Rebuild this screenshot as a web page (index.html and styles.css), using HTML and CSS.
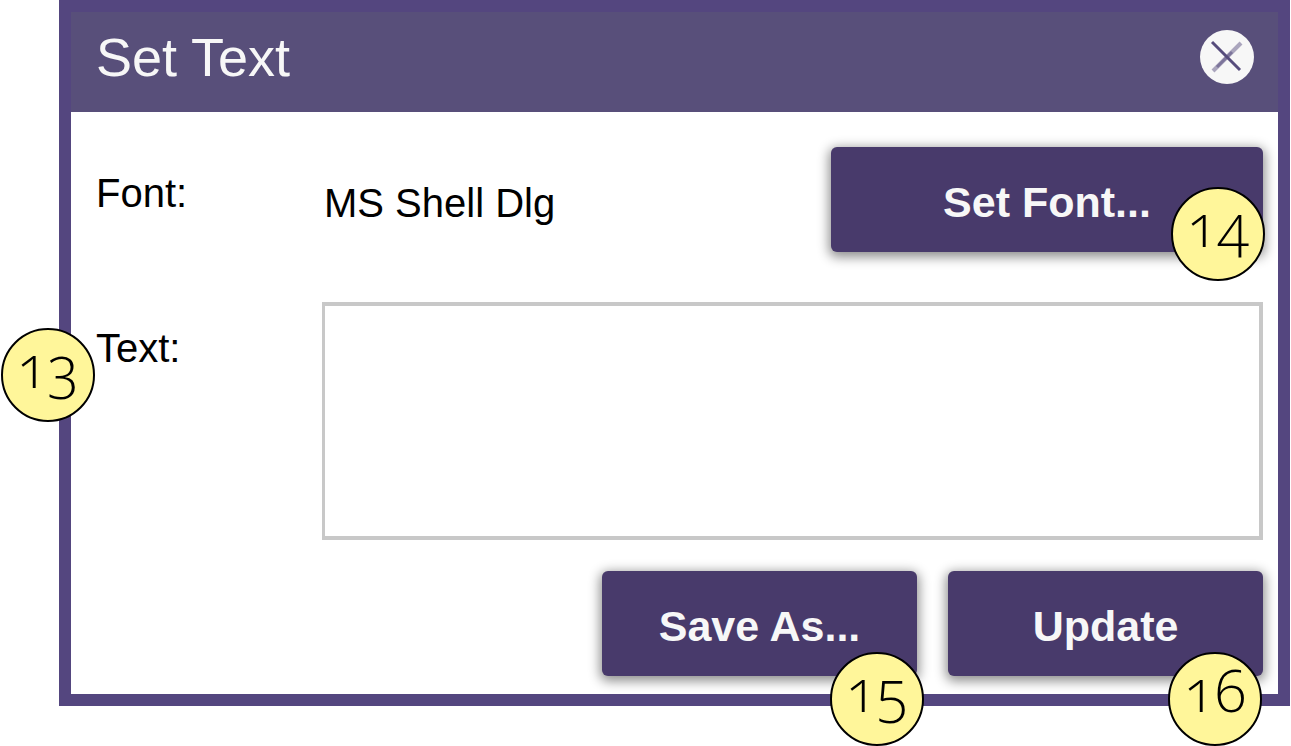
FILE: index.html
```html
<!DOCTYPE html>
<html lang="en">
<head>
    <meta charset="UTF-8">
    <meta name="viewport" content="width=device-width, initial-scale=1.0">
    <title>Set Text</title>
    <link rel="stylesheet" href="styles.css">
</head>
<body>

<form class="dialog">
    <header class="dialog-header">
        <h1>Set Text</h1>
        <button type="button" class="close" aria-label="Close">
            <svg viewBox="0 0 56 56" width="56" height="56">
                <circle cx="28" cy="28" r="27" fill="#f7f7f7"/>
                <path d="M42 14L14 42" stroke="#aaa5bd" stroke-width="4"/>
                <path d="M33 23L18 38" stroke="#7d759b" stroke-width="3"/>
                <path d="M13 13L41 41" stroke="#564c7c" stroke-width="3"/>
            </svg>
        </button>
    </header>

    <div class="dialog-body">
        <div class="row">
            <span class="label">Font:</span>
            <span class="value">MS Shell Dlg</span>
            <div class="action wide">
                <button type="button" class="btn">Set Font...</button>
                <span class="badge badge-font">14</span>
            </div>
        </div>

        <div class="row">
            <label class="label" for="text">Text:</label>
            <textarea id="text" class="text-box"></textarea>
            <span class="badge badge-text">13</span>
        </div>

        <div class="buttons">
            <div class="action">
                <button type="button" class="btn">Save As...</button>
                <span class="badge badge-save">15</span>
            </div>
            <div class="action">
                <button type="submit" class="btn">Update</button>
                <span class="badge badge-update">16</span>
            </div>
        </div>
    </div>
</form>

</body>
</html>
```
FILE: styles.css
```css
* {
    box-sizing: border-box;
}

body {
    margin: 0;
    background: #fff;
    color: #000;
    font-family: "Liberation Sans", Arial, sans-serif;
    font-size: 40px;
    line-height: 48px;
}

.dialog {
    margin: 0 1px 40px 59px;
    border: 12px solid #54467f;
    background: #fff;
}

.dialog-header {
    display: flex;
    justify-content: space-between;
    align-items: center;
    padding: 16px 23px 26px 25px;
    background: #584f7a;
}

.dialog-header h1 {
    margin: 0;
    color: #f7f7f7;
    font-size: 54px;
    font-weight: normal;
    line-height: 58px;
}

.close {
    display: flex;
    padding: 0;
    border: none;
    background: none;
    cursor: pointer;
}

.dialog-body {
    display: flex;
    flex-direction: column;
    padding: 35px 15px 18px 25px;
}

.row {
    position: relative;
    display: flex;
    margin-bottom: 50px;
}

.label {
    width: 226px;
    padding-top: 22px;
}

.value {
    flex: 1;
    padding: 32px 0 0 2px;
}

.text-box {
    flex: 1;
    height: 238px;
    padding: 12px;
    border: 4px solid #c8c8c8;
    border-left-width: 3px;
    background: #fff;
    font: inherit;
    resize: none;
    outline: none;
}

.row + .row {
    margin-bottom: 31px;
}

.buttons {
    display: flex;
    justify-content: flex-end;
    gap: 31px;
}

.action {
    position: relative;
    width: 315px;
}

.action.wide {
    width: 432px;
}

.btn {
    display: block;
    width: 100%;
    height: 105px;
    padding: 6px 0 0;
    border: none;
    border-radius: 6px;
    background: #483a6b;
    box-shadow: 0 3px 12px 2px rgba(0, 0, 0, 0.45);
    color: #f7f7f7;
    font-family: inherit;
    font-size: 43px;
    font-weight: bold;
    cursor: pointer;
}

/* numbered callouts over the controls */
.badge {
    position: absolute;
    width: 94px;
    height: 94px;
    border: 2px solid #000;
    border-radius: 50%;
    background: #fff69a;
    font-family: "Open Sans", sans-serif;
    font-size: 58px;
    font-weight: 300;
    font-variant-numeric: oldstyle-nums;
    line-height: 72px;
    text-align: center;
}

.badge-text {
    top: 26px;
    left: -95px;
}

.badge-font {
    top: 40px;
    right: -2px;
}

.badge-save {
    top: 81px;
    right: -7px;
}

.badge-update {
    top: 81px;
    right: 1px;
}
```
